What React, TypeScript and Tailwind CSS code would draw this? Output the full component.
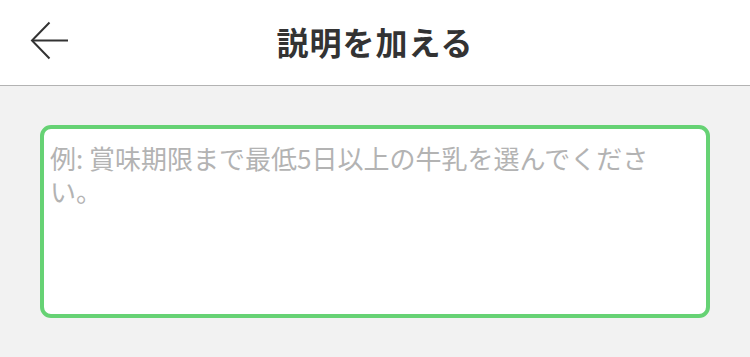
export default function App() {
  return (
    <div
      className="min-h-[357px] w-[750px] bg-[#f2f2f2]"
      style={{ fontFamily: '"Noto Sans CJK JP", "Noto Sans", sans-serif' }}
    >
      <header className="relative flex h-[86px] items-center justify-center border-b border-[#b3b3b3] bg-white">
        <button className="absolute left-[30px] top-[21px] text-[#333]">
          <svg width="40" height="40" viewBox="0 0 40 40" fill="none" stroke="currentColor" strokeWidth="2">
            <path d="M38 19.5H2" />
            <path d="M19.5 1.5L2 19.5l17.5 18" />
          </svg>
        </button>
        <h1 className="-mt-1 text-[32px] font-bold leading-none tracking-[1px] text-[#333]">説明を加える</h1>
      </header>
      <div className="px-[40px] pt-[39px]">
        <textarea
          className="block h-[193px] w-full resize-none rounded-[11px] border-4 border-[#66d274] bg-white pt-[12px] pb-[8px] pl-[6px] pr-[30px] text-[26px] leading-[33px] text-[#333] outline-none placeholder:text-[#b3b3b3]"
          placeholder="例: 賞味期限まで最低5日以上の牛乳を選んでください。"
        />
      </div>
    </div>
  );
}
